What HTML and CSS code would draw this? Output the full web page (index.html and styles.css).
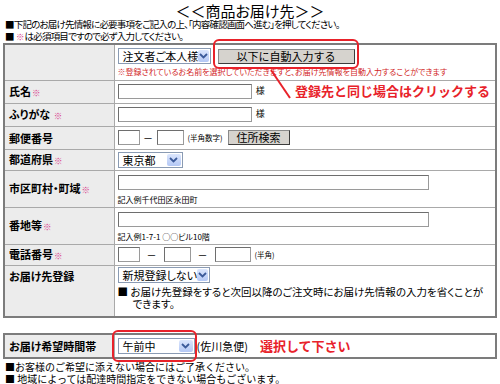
FILE: index.html
```html
<!DOCTYPE html>
<html lang="ja">
<head>
  <meta charset="UTF-8">
  <title>商品お届け先</title>
  <link rel="stylesheet" href="styles.css">
</head>
<body>
  <h1 class="title">＜＜商品お届け先＞＞</h1>
  <p class="note">■下記のお届け先情報に必要事項をご記入の上、「内容確認画面へ進む」を押してください。</p>
  <p class="note">■ <span class="req">※</span>は必須項目ですので必ず入力してください。</p>

  <div class="form-wrap">
    <table class="form">
      <tr class="row-auto">
        <th></th>
        <td>
          <div class="line">
            <span class="select w-order">注文者ご本人様<span class="arrow"><svg width="9" height="6" viewBox="0 0 9 6"><polyline points="1,1 4.5,4.5 8,1" fill="none" stroke="#3b5a9a" stroke-width="1.8"/></svg></span></span>
            <button class="btn btn-auto" type="button">以下に自動入力する</button>
          </div>
          <p class="hint">※登録されているお名前を選択していただきますと、お届け先情報を自動入力することができます</p>
        </td>
      </tr>
      <tr class="row-s">
        <th>氏名<span class="req">※</span></th>
        <td><input class="txt w-name" type="text"> <span class="unit">様</span></td>
      </tr>
      <tr class="row-s">
        <th>ふりがな <span class="req">※</span></th>
        <td><input class="txt w-name" type="text"> <span class="unit">様</span></td>
      </tr>
      <tr class="row-s">
        <th>郵便番号</th>
        <td>
          <input class="txt w-zip1" type="text"><span class="dash">－</span><input class="txt w-zip2" type="text"><span class="small">(半角数字)</span><button class="btn btn-zip" type="button">住所検索</button>
        </td>
      </tr>
      <tr class="row-xs">
        <th>都道府県<span class="req">※</span></th>
        <td><span class="select w-pref">東京都<span class="arrow"><svg width="9" height="6" viewBox="0 0 9 6"><polyline points="1,1 4.5,4.5 8,1" fill="none" stroke="#3b5a9a" stroke-width="1.8"/></svg></span></span></td>
      </tr>
      <tr class="row-l">
        <th>市区町村・町域<span class="req">※</span></th>
        <td>
          <input class="txt w-addr" type="text">
          <p class="example">記入例千代田区永田町</p>
        </td>
      </tr>
      <tr class="row-l">
        <th>番地等<span class="req">※</span></th>
        <td>
          <input class="txt w-addr" type="text">
          <p class="example">記入例1-7-1 ○○ビル10階</p>
        </td>
      </tr>
      <tr class="row-xs">
        <th>電話番号<span class="req">※</span></th>
        <td>
          <input class="txt w-tel1" type="text"><span class="dash dash-tel">－</span><input class="txt w-tel2" type="text"><span class="dash dash-tel">－</span><input class="txt w-tel3" type="text"><span class="small">(半角)</span>
        </td>
      </tr>
      <tr class="row-reg">
        <th>お届け先登録</th>
        <td>
          <span class="select w-reg">新規登録しない<span class="arrow"><svg width="9" height="6" viewBox="0 0 9 6"><polyline points="1,1 4.5,4.5 8,1" fill="none" stroke="#3b5a9a" stroke-width="1.8"/></svg></span></span>
          <p class="reg-note">■ お届け先登録をすると次回以降のご注文時にお届け先情報の入力を省くことができます。</p>
        </td>
      </tr>
    </table>

    <span class="ring ring-auto"></span>
    <svg class="pointer" width="30" height="34" viewBox="0 0 30 34"><line x1="3" y1="2" x2="22" y2="30" stroke="#e8222a" stroke-width="2"/></svg>
    <span class="callout callout-auto">登録先と同じ場合はクリックする</span>
  </div>

  <table class="form form-time">
    <tr>
      <th>お届け希望時間帯</th>
      <td>
        <span class="ring-holder">
          <span class="select w-time">午前中<span class="arrow"><svg width="9" height="6" viewBox="0 0 9 6"><polyline points="1,1 4.5,4.5 8,1" fill="none" stroke="#3b5a9a" stroke-width="1.8"/></svg></span></span>
          <span class="ring ring-time"></span>
        </span><span class="carrier">(佐川急便)</span><span class="callout callout-time">選択して下さい</span>
      </td>
    </tr>
  </table>

  <p class="note-lg">■お客様のご希望に添えない場合にはご了承ください。</p>
  <p class="note-lg">■ 地域によっては配達時間指定をできない場合もございます。</p>
</body>
</html>
```

FILE: styles.css
```css
* { box-sizing: border-box; }
body { margin: 0; padding: 0 3px; background: #fff; color: #000; font-family: "Noto Sans CJK JP", "Noto Sans", sans-serif; font-size: 10.5px; line-height: 12px; font-feature-settings: "palt"; }
p { margin: 0; }
.title { margin: 0; padding-top: 4px; height: 18px; font-size: 15px; line-height: 14px; font-weight: normal; text-align: center; }
.note { padding-left: 2px; height: 12px; font-size: 9.5px; line-height: 12px; letter-spacing: -0.8px; white-space: nowrap; }
.note-lg { padding-left: 2px; height: 12px; font-size: 10px; line-height: 12px; font-feature-settings: normal; white-space: nowrap; }
.req { color: #d8408c; font-size: 8.5px; font-weight: normal; letter-spacing: 0; margin-left: 1px; }

.form-wrap { position: relative; margin-top: 1px; }
.form { width: 494px; border-collapse: collapse; border: 2px solid #7c7c7c; }
.form th { width: 110px; padding: 0 0 0 4px; background: #ececec; font-size: 11px; font-weight: bold; text-align: left; vertical-align: middle; border: 1px solid #a9a9a9; white-space: nowrap; }
.form td { padding: 0 0 0 3px; vertical-align: middle; border: 1px solid #a9a9a9; white-space: nowrap; }

.row-auto { height: 36px; }
.row-auto td { vertical-align: top; padding-top: 3px; }
.row-s { height: 23px; }
.row-xs { height: 21px; }
.row-l { height: 37px; }
.row-l td { vertical-align: top; padding-top: 4px; }
.row-reg { height: 52px; }
.row-reg th { vertical-align: top; padding-top: 4px; }
.row-reg td { vertical-align: top; padding-top: 1px; }

.line { display: flex; align-items: center; gap: 7px; }
.select { display: inline-flex; align-items: center; justify-content: space-between; height: 16px; padding: 0 1px 0 4px; border: 1px solid #8a9bb3; background: #fff; font-size: 11px; vertical-align: middle; }
.arrow { display: inline-flex; align-items: center; justify-content: center; width: 14px; height: 12px; background: linear-gradient(#dbe6fd, #b4c8f5); border-radius: 2px; }
.w-order { width: 93px; }
.w-pref { width: 65px; }
.w-reg { width: 92px; }
.w-time { width: 77px; }

.btn { height: 15px; padding: 0; border: 1px solid #3c3c3c; border-top-color: #8a8a8a; border-left-color: #8a8a8a; background: #d6d3ce; font-family: inherit; font-size: 11px; line-height: 13px; color: #000; vertical-align: middle; }
.btn-auto { width: 137px; }
.btn-zip { width: 62px; margin-left: 5px; }

.hint { margin-top: 3px; color: #d21f1f; font-size: 8px; line-height: 10px; }

.txt { height: 15px; padding: 0; border: 1px solid #6e6e6e; border-right-color: #9a9a9a; border-bottom-color: #9a9a9a; background: #fff; vertical-align: middle; }
.w-name { width: 134px; }
.w-zip1 { width: 22px; }
.w-zip2 { width: 27px; }
.w-addr { width: 311px; }
.w-tel1 { width: 22px; }
.w-tel2 { width: 27px; }
.w-tel3 { width: 36px; }
.unit { margin-left: 2px; font-size: 9px; }
.dash { display: inline-block; width: 17px; text-align: center; font-size: 10px; vertical-align: middle; }
.dash-tel { width: 24px; }
.small { margin-left: 4px; font-size: 7.5px; vertical-align: middle; }
.example { margin-top: 5px; font-size: 8px; line-height: 10px; }
.reg-note { margin-top: 3px; width: 366px; padding-left: 15px; text-indent: -15px; white-space: normal; font-size: 10.5px; line-height: 12px; }

.ring { position: absolute; border: 2px solid #e8222a; border-radius: 6px; pointer-events: none; }
.ring-auto { left: 210px; top: -4px; width: 146px; height: 30px; }
.pointer { position: absolute; left: 265px; top: 25px; }
.callout { color: #e8222a; font-size: 13px; line-height: 14px; font-weight: bold; font-feature-settings: normal; }
.callout-auto { position: absolute; left: 292px; top: 41px; }

.form-time { margin-top: 15px; margin-bottom: 2px; }
.form-time tr { height: 24px; }
.ring-holder { position: relative; display: inline-block; vertical-align: middle; }
.ring-time { left: -6px; top: -8px; width: 85px; height: 32px; }
.carrier { margin-left: 2px; font-size: 11px; vertical-align: middle; }
.callout-time { margin-left: 12px; vertical-align: middle; }
```
